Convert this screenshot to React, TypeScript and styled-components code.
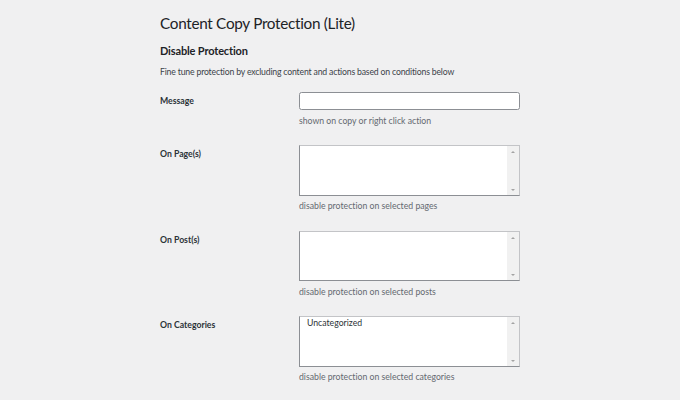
import React from "react";
import styled, { createGlobalStyle } from "styled-components";

const Global = createGlobalStyle`
  html, body { margin: 0; padding: 0; background: #f0f0f1; }
  body {
    font-family: Lato, "Open Sans", sans-serif;
    color: #1d2327;
    font-variant-ligatures: none;
  }
`;

const Page = styled.div`
  width: 680px;
  height: 400px;
  box-sizing: border-box;
  padding: 13px 0 0 160px;
  overflow: hidden;
`;

const Title = styled.h1`
  margin: 0;
  font-size: 15.3px;
  line-height: 20px;
  font-weight: 400;
  letter-spacing: -0.3px;
  color: #1d2327;
`;

const Heading = styled.h2`
  margin: 11px 0 0;
  font-size: 11px;
  line-height: 14px;
  font-weight: 700;
  letter-spacing: -0.15px;
  color: #1d2327;
`;

const Desc = styled.p`
  margin: 8px 0 0;
  font-size: 8.7px;
  line-height: 12px;
  letter-spacing: -0.18px;
  color: #3c434a;
`;

const Form = styled.div`
  margin-top: 4px;
  display: grid;
  grid-template-columns: 139px 221px;
`;

const Label = styled.div`
  padding: 13px 0 8.5px;
  font-size: 8.7px;
  line-height: 12px;
  font-weight: 700;
  color: #2c3338;
`;

const Field = styled.div`
  padding: 10px 0 8.5px;
  display: flex;
  flex-direction: column;
`;

const TextInput = styled.div`
  height: 18px;
  box-sizing: border-box;
  background: #fff;
  border: 1px solid #8c8f94;
  border-radius: 2.5px;
`;

const ListBox = styled.div`
  height: 50.5px;
  box-sizing: border-box;
  background: #fff;
  border: 1px solid #c3c4c7;
  border-left-color: #8c8f94;
  border-bottom-color: #8c8f94;
  display: flex;
`;

const Options = styled.div`
  flex: 1;
  padding: 0 7px;
  font-size: 8.7px;
  line-height: 12px;
  color: #2c3338;
`;

const Scrollbar = styled.div`
  width: 12px;
  background: #f1f1f1;
  display: flex;
  flex-direction: column;
  justify-content: space-between;
  align-items: center;
  padding: 5px 0 4px;
  box-sizing: border-box;
`;

const Arrow = styled.div<{ $down?: boolean }>`
  width: 0;
  height: 0;
  border-left: 2.5px solid transparent;
  border-right: 2.5px solid transparent;
  ${(p) =>
    p.$down
      ? "border-top: 2.5px solid #a3a3a3;"
      : "border-bottom: 2.5px solid #a3a3a3;"}
`;

const Help = styled.div`
  margin-top: 4.5px;
  font-size: 8.7px;
  line-height: 12px;
  color: #646970;
`;

const rows = [
  { label: "On Page(s)", help: "disable protection on selected pages", items: [] as string[] },
  { label: "On Post(s)", help: "disable protection on selected posts", items: [] as string[] },
  { label: "On Categories", help: "disable protection on selected categories", items: ["Uncategorized"] },
];

export default function App() {
  return (
    <Page>
      <Global />
      <Title>Content Copy Protection (Lite)</Title>
      <Heading>Disable Protection</Heading>
      <Desc>Fine tune protection by excluding content and actions based on conditions below</Desc>
      <Form>
        <Label>Message</Label>
        <Field>
          <TextInput />
          <Help>shown on copy or right click action</Help>
        </Field>
        {rows.map((r) => (
          <React.Fragment key={r.label}>
            <Label>{r.label}</Label>
            <Field>
              <ListBox>
                <Options>
                  {r.items.map((i) => (
                    <div key={i}>{i}</div>
                  ))}
                </Options>
                <Scrollbar>
                  <Arrow />
                  <Arrow $down />
                </Scrollbar>
              </ListBox>
              <Help>{r.help}</Help>
            </Field>
          </React.Fragment>
        ))}
      </Form>
    </Page>
  );
}
